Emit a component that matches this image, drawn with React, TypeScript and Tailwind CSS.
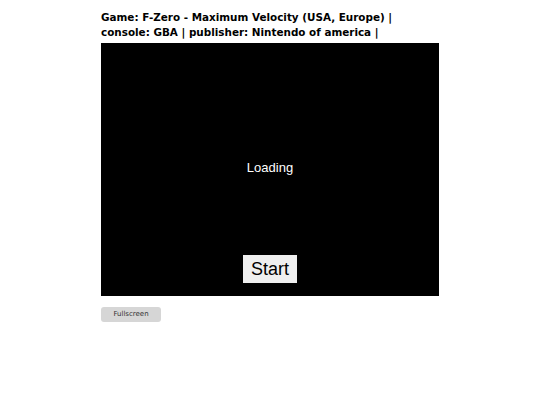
import React from "react";

export default function App() {
  return (
    <div className="min-h-[405px] w-[540px] bg-white">
      <div className="mx-auto w-[338px] pt-[10px]">
        <h1 className="font-['DejaVu_Sans',sans-serif] text-[10.4px] font-bold leading-[15px] text-black">
          Game: F-Zero - Maximum Velocity (USA, Europe) |<br />
          console: GBA | publisher: Nintendo of america |
        </h1>
        <div className="relative mt-[3px] h-[253px] w-[338px] bg-black">
          <div className="absolute inset-0 flex items-center justify-center pb-[3px] font-['Liberation_Sans',sans-serif] text-[13px] text-white">
            Loading
          </div>
          <button className="absolute bottom-[13px] left-[142px] flex h-[28px] w-[54px] items-center justify-center bg-[#efefef] font-['Liberation_Sans',sans-serif] text-[18px] text-black">
            Start
          </button>
        </div>
        <button className="mt-[11px] flex h-[15px] w-[60px] items-center justify-center rounded-[3px] bg-[#d6d6d6] font-['DejaVu_Sans',sans-serif] text-[7px] text-[#333]">
          Fullscreen
        </button>
      </div>
    </div>
  );
}
